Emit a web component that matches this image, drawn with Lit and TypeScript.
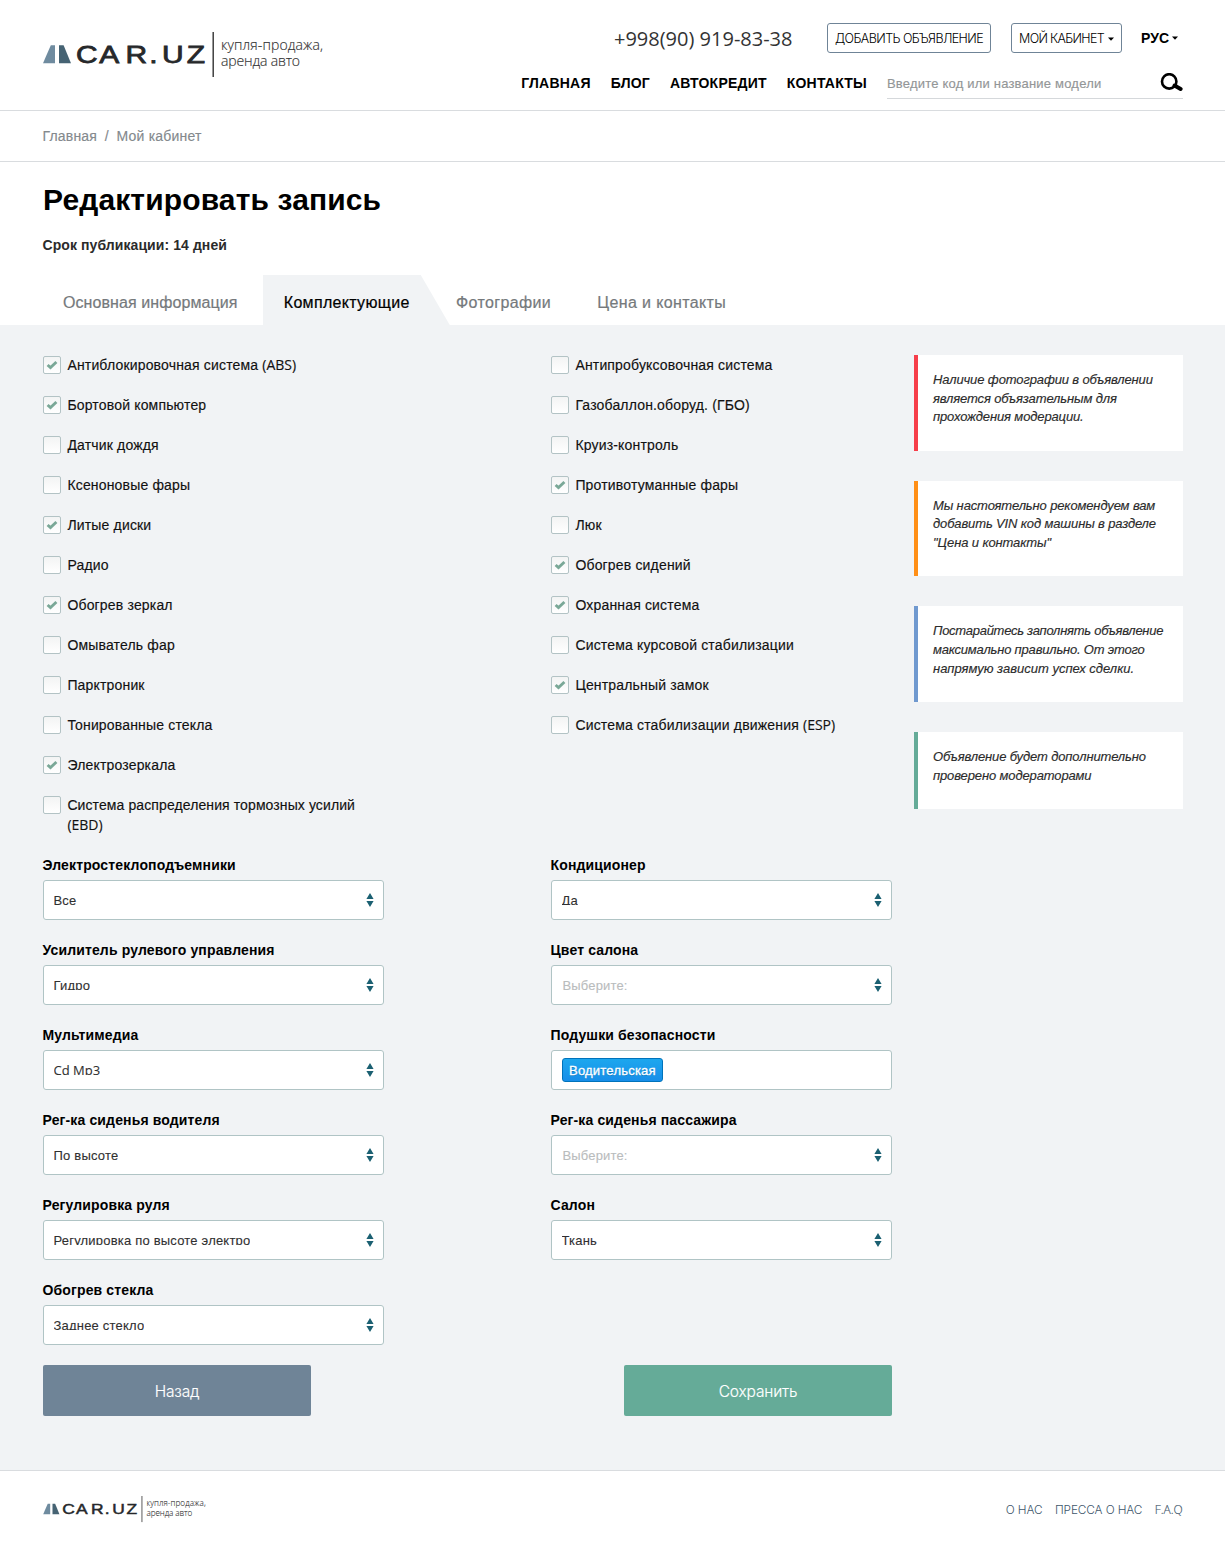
import { LitElement, html, css, svg, nothing } from "lit";
import { customElement, property } from "lit/decorators.js";
import { classMap } from "lit/directives/class-map.js";

/** Wraps Latin runs so they get the secondary typeface. */
const mixed = (text: string) =>
  text.split(/(\(?[A-Za-z][A-Za-z0-9. ]*[A-Za-z0-9]\)?)/).map((part, i) =>
    i % 2 ? html`<span class="latin">${part}</span>` : part
  );

const latin = css`
  .latin {
    font-family: "Open Sans", sans-serif;
    letter-spacing: 0;
    line-height: 0;
  }
`;

@customElement("site-logo")
class SiteLogo extends LitElement {
  static styles = css`
    :host { display: block; }
    svg { display: block; width: 100%; height: 100%; overflow: visible; }
    .name { font: 400 24.6px "Liberation Sans", Arial, sans-serif; fill: #26282a; stroke: #26282a; stroke-width: 0.8; }
    .tag { font: 300 14px "Open Sans", sans-serif; fill: #333; stroke: #333; stroke-width: 0.15; }
  `;
  render() {
    return html`
      <svg viewBox="0 0 282 46" role="img">
        <path d="M7.8 13.3H12V31.3H0z" fill="#6f8b9f" />
        <path d="M16 13.3h4.6L28 31.3H16z" fill="#466373" />
        <text class="name" transform="scale(1.22 1)" x="27.1 46.2 67.7 87 97.6 117.8" y="31">CAR.UZ</text>
        <path d="M170.2 0V45" stroke="#333" stroke-width="1.4" />
        <text class="tag" x="178" y="18" textLength="102">купля-продажа,</text>
        <text class="tag" x="178" y="34" textLength="79">аренда авто</text>
      </svg>
    `;
  }
}

@customElement("check-item")
class CheckItem extends LitElement {
  @property() label = "";
  @property({ type: Boolean }) checked = false;
  static styles = [
    latin,
    css`
      :host {
        display: flex; gap: 6.4px; font-size: 14px; line-height: 20px; color: #111; letter-spacing: 0.17px;
        -webkit-text-stroke: 0.15px #111;
      }
      .box {
        flex: none; box-sizing: border-box; width: 18px; height: 18px; margin-top: 1px;
        border: 1px solid #b3c3c5; border-radius: 2px; background: linear-gradient(#f3f4f4, #fff);
        display: grid; place-items: center;
      }
    `,
  ];
  render() {
    return html`
      <span class="box">
        ${this.checked
          ? html`<svg width="12" height="10" viewBox="0 0 12 10">
              <path d="M1.6 5L4.5 7.6L10.4 2" fill="none" stroke="#7aa897" stroke-width="2.9" />
            </svg>`
          : nothing}
      </span>
      <span>${mixed(this.label)}</span>
    `;
  }
}

@customElement("select-field")
class SelectField extends LitElement {
  @property() label = "";
  @property() value = "";
  @property() tag = "";
  static styles = [
    latin,
    css`
      :host { display: flex; flex-direction: column; gap: 5px; }
      .label {
        font-weight: 700; font-size: 14px; line-height: 20px; letter-spacing: 0.14px; color: #000; margin-left: -0.5px;
      }
      .control {
        box-sizing: border-box; height: 40px; padding: 0 10.5px 0 9.5px; border: 1px solid #b0c4c5;
        border-radius: 3px; background: #fff; display: flex; align-items: center; justify-content: space-between;
        font-size: 13px; letter-spacing: 0.2px; color: #303030;
      }
      .value {
        align-self: flex-start; margin-top: 12px; height: 12px; line-height: 15px; overflow: hidden;
        -webkit-text-stroke: 0.1px currentColor;
      }
      .empty { overflow: visible; color: #b9bcbd; padding-left: 1px; letter-spacing: 0.15px; }
      .tag {
        box-sizing: border-box; height: 24px; padding: 0 6px; line-height: 23px; border: 1px solid #0073bb;
        border-radius: 3px; background: linear-gradient(#1da7ee, #178ee9); color: #fff; margin-left: 0.5px;
        text-shadow: 0 1px 0 rgba(0, 51, 83, 0.3); letter-spacing: 0.22px; -webkit-text-stroke: 0.3px #fff;
      }
      .arrows { margin-right: -1px; }
    `,
  ];
  render() {
    return html`
      <div class="label">${this.label}</div>
      <div class="control">
        ${this.tag
          ? html`<span class="tag">${this.tag}</span>`
          : html`
              <span class=${classMap({ value: true, empty: !this.value })}>${mixed(this.value || "Выберите:")}</span>
              <svg class="arrows" width="8" height="14" viewBox="0 0 8 14">
                <path d="M4 0L7.6 6H0.4zM4 14L7.6 8H0.4z" fill="#1b6072" />
              </svg>
            `}
      </div>
    `;
  }
}

const NAV = ["ГЛАВНАЯ", "БЛОГ", "АВТОКРЕДИТ", "КОНТАКТЫ"];
const TABS = ["Основная информация", "Комплектующие", "Фотографии", "Цена и контакты"];
const LEFT: [string, boolean][] = [
  ["Антиблокировочная система (ABS)", true],
  ["Бортовой компьютер", true],
  ["Датчик дождя", false],
  ["Ксеноновые фары", false],
  ["Литые диски", true],
  ["Радио", false],
  ["Обогрев зеркал", true],
  ["Омыватель фар", false],
  ["Парктроник", false],
  ["Тонированные стекла", false],
  ["Электрозеркала", true],
  ["Система распределения тормозных усилий (EBD)", false],
];
const RIGHT: [string, boolean][] = [
  ["Антипробуксовочная система", false],
  ["Газобаллон.оборуд. (ГБО)", false],
  ["Круиз-контроль", false],
  ["Противотуманные фары", true],
  ["Люк", false],
  ["Обогрев сидений", true],
  ["Охранная система", true],
  ["Система курсовой стабилизации", false],
  ["Центральный замок", true],
  ["Система стабилизации движения (ESP)", false],
];
const FIELDS: { label: string; value?: string; tag?: string }[] = [
  { label: "Электростеклоподъемники", value: "Все" },
  { label: "Кондиционер", value: "Да" },
  { label: "Усилитель рулевого управления", value: "Гидро" },
  { label: "Цвет салона" },
  { label: "Мультимедиа", value: "Cd Mp3" },
  { label: "Подушки безопасности", tag: "Водительская" },
  { label: "Рег-ка сиденья водителя", value: "По высоте" },
  { label: "Рег-ка сиденья пассажира" },
  { label: "Регулировка руля", value: "Регулировка по высоте электро" },
  { label: "Салон", value: "Ткань" },
  { label: "Обогрев стекла", value: "Заднее стекло" },
];
const NOTES: [string, string[]][] = [
  ["red", ["Наличие фотографии в объявлении", "является объязательным для", "прохождения модерации."]],
  ["orange", ["Мы настоятельно рекомендуем вам", "добавить VIN код машины в разделе", '"Цена и контакты"']],
  ["blue", ["Постарайтесь заполнять объявление", "максимально правильно. От этого", "напрямую зависит успех сделки."]],
  ["green", ["Объявление будет дополнительно", "проверено модераторами"]],
];

const caret = svg`<path d="M0 0.5H6L3 3.8z" fill="#000" />`;

@customElement("app-root")
class AppRoot extends LitElement {
  static styles = css`
    :host {
      display: flex; flex-direction: column; min-height: 1546px; background: #fff; color: #000;
      font-family: "Liberation Sans", Arial, sans-serif; font-size: 14px;
    }
    .wrap { padding: 0 42px 0 43px; }
    .header { display: flex; justify-content: space-between; height: 110px; border-bottom: 1px solid #d9dcdf; }
    .logo { width: 282px; height: 46px; margin-top: 32px; }
    .tools { display: flex; flex-direction: column; align-items: flex-end; padding-top: 23px; }
    .top { display: flex; align-items: center; height: 30px; }
    .phone { font: 400 20px/30px "Open Sans", sans-serif; color: #333; margin-right: 34.5px; padding-top: 2px; }
    .btn {
      box-sizing: border-box; height: 30px; padding: 0 7px; border: 1px solid #6f8497; border-radius: 3px;
      display: flex; align-items: center; justify-content: center; gap: 4px; margin-right: 20px;
      font: 300 12.5px "Inter", sans-serif; letter-spacing: -0.58px; white-space: nowrap; padding-top: 1px;
    }
    .add { width: 164px; }
    .cabinet { width: 111px; margin-right: 19px; letter-spacing: -0.7px; }
    .lang { display: flex; align-items: center; gap: 3px; width: 42px; font-weight: 700; letter-spacing: 0.1px; }
    .bottom { display: flex; align-items: center; height: 33px; margin-top: 13px; }
    .nav { display: flex; gap: 20px; font-weight: 700; letter-spacing: 0.22px; margin-right: 20px; }
    .search {
      box-sizing: border-box; width: 296px; height: 33px; border-bottom: 1px solid #d5d8db; padding-top: 2px;
      display: flex; justify-content: space-between; align-items: center;
      font-size: 13px; letter-spacing: 0.2px; color: #939697; -webkit-text-stroke: 0.15px #939697;
    }
    .crumbs {
      height: 50px; line-height: 50px; border-bottom: 1px solid #d9dcdf; color: #84898d;
      letter-spacing: 0.2px; display: flex; gap: 8.3px; text-indent: -0.6px; -webkit-text-stroke: 0.15px #84898d;
    }
    h1 { margin: 0; padding-top: 18px; font-size: 30px; line-height: 40px; letter-spacing: 0.13px; }
    .term {
      margin: 15px 0 0 -0.5px; line-height: 20px; font-weight: 700; color: #2b2b2b; letter-spacing: 0.08px;
    }
    .tabs {
      display: flex; gap: 46.3px; padding-left: 63px; margin-top: 20px; height: 50px; line-height: 55px;
      font-size: 16px; color: #75797c; letter-spacing: 0.36px; -webkit-text-stroke: 0.2px currentColor;
    }
    .tab:first-child { letter-spacing: 0.08px; }
    .tab.active { position: relative; z-index: 0; color: #000; letter-spacing: 0.32px; }
    .tab.active::before {
      content: ""; position: absolute; z-index: -1; inset: 0 -40px 0 -21px; background: #f1f3f5;
      clip-path: polygon(0 0, 158px 0, 187px 100%, 0 100%);
    }
    .body {
      background: #f1f3f5; padding-top: 30px; padding-bottom: 54px; display: flex;
      justify-content: space-between; align-items: flex-start;
    }
    .form { width: 849px; display: flex; flex-direction: column; gap: 20px; }
    .cols { display: grid; grid-template-columns: 341px 341px; justify-content: space-between; gap: 20px 0; }
    .list { display: flex; flex-direction: column; gap: 20px; }
    .list check-item { max-width: 318px; }
    .list check-item:nth-child(12) { letter-spacing: 0.1px; }
    .actions { display: flex; justify-content: space-between; }
    .action {
      width: 268px; height: 51px; border-radius: 2px; text-align: center;
      color: #fff; font: 300 15.5px/53px "Inter", sans-serif; letter-spacing: -0.15px; background: #6f8497;
      -webkit-text-stroke: 0.15px #fff;
    }
    .save { background: #65ab98; }
    .notes { width: 269px; display: flex; flex-direction: column; gap: 30px; }
    .note {
      padding: 16.1px 0 23.9px 15px; border-left: 4px solid; background: #fff; font-style: italic;
      font-size: 13px; line-height: 18.57px;
    }
    .note div {
      color: #2b2b2b; white-space: nowrap; letter-spacing: -0.13px; -webkit-text-stroke: 0.15px #2b2b2b;
    }
    .note:nth-child(3) div { letter-spacing: -0.27px; }
    .note:nth-child(3) div:nth-child(n + 2) { letter-spacing: -0.2px; }
    .note:nth-child(3) div:nth-child(3) { letter-spacing: 0; }
    .red { border-color: #f63e4a; }
    .orange { border-color: #ff8f17; }
    .blue { border-color: #7099cf; }
    .green { border-color: #65ab98; }
    .footer {
      flex: 1; border-top: 1px solid #d9dcdf; display: flex; justify-content: space-between; align-items: flex-start;
    }
    .footlogo { width: 164px; height: 26.7px; margin-top: 25px; }
    .links {
      display: flex; gap: 12.5px; margin-top: 29px; color: #40566b;
      font: 300 11.8px/20px "Inter", sans-serif; letter-spacing: -0.1px; margin-right: 0.5px;
    }
    .faq { font: 300 12px/20px "Open Sans", sans-serif; -webkit-text-stroke: 0.15px #40566b; }
  `;

  render() {
    return html`
      <header class="header wrap">
        <site-logo class="logo"></site-logo>
        <div class="tools">
          <div class="top">
            <span class="phone">+998(90) 919-83-38</span>
            <span class="btn add">ДОБАВИТЬ ОБЪЯВЛЕНИЕ</span>
            <span class="btn cabinet">МОЙ КАБИНЕТ <svg width="6" height="4">${caret}</svg></span>
            <span class="lang">РУС <svg width="6" height="4">${caret}</svg></span>
          </div>
          <div class="bottom">
            <nav class="nav">${NAV.map((n) => html`<span>${n}</span>`)}</nav>
            <div class="search">
              <span>Введите код или название модели</span>
              <svg width="23" height="20" viewBox="0 0 23 20">
                <circle cx="9.2" cy="8.4" r="7.2" fill="none" stroke="#000" stroke-width="2.6" />
                <path d="M14.5 12.6L20.6 16" stroke="#000" stroke-width="4" stroke-linecap="round" />
              </svg>
            </div>
          </div>
        </div>
      </header>
      <div class="crumbs wrap"><span>Главная</span><span>/</span><span>Мой кабинет</span></div>
      <div class="wrap">
        <h1>Редактировать запись</h1>
        <div class="term">Срок публикации: 14 дней</div>
      </div>
      <div class="tabs">
        ${TABS.map((t, i) => html`<span class=${classMap({ tab: true, active: i === 1 })}>${t}</span>`)}
      </div>
      <main class="body wrap">
        <div class="form">
          <div class="cols">
            ${[LEFT, RIGHT].map(
              (list) => html`<div class="list">
                ${list.map(([l, c]) => html`<check-item .label=${l} .checked=${c}></check-item>`)}
              </div>`
            )}
          </div>
          <div class="cols">
            ${FIELDS.map(
              (f) => html`<select-field .label=${f.label} .value=${f.value ?? ""} .tag=${f.tag ?? ""}></select-field>`
            )}
          </div>
          <div class="actions">
            <div class="action">Назад</div>
            <div class="action save">Сохранить</div>
          </div>
        </div>
        <aside class="notes">
          ${NOTES.map(([c, lines]) => html`<div class="note ${c}">${lines.map((l) => html`<div>${l}</div>`)}</div>`)}
        </aside>
      </main>
      <footer class="footer wrap">
        <site-logo class="footlogo"></site-logo>
        <div class="links"><span>О НАС</span><span>ПРЕССА О НАС</span><span class="faq">F.A.Q</span></div>
      </footer>
    `;
  }
}
